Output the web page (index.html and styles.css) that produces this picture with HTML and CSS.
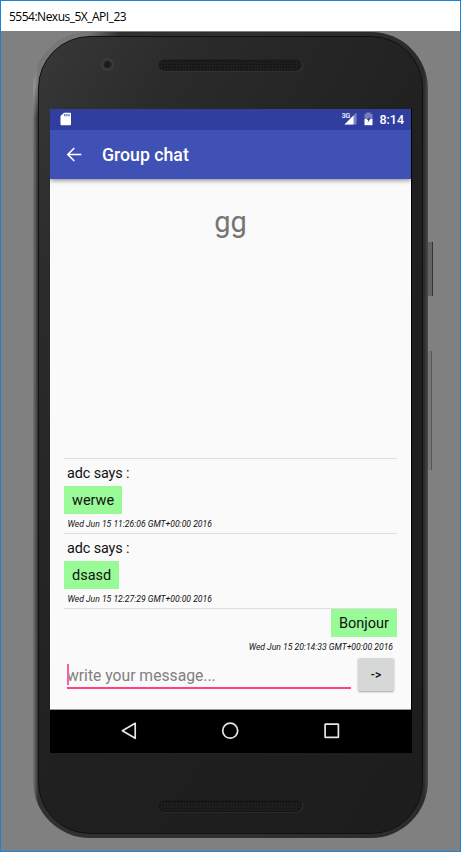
FILE: index.html
```html
<!DOCTYPE html>
<html lang="en">
<head>
<meta charset="utf-8">
<title>5554:Nexus_5X_API_23</title>
<link rel="stylesheet" href="styles.css">
</head>
<body>
<div class="window">
  <header class="titlebar"><span class="window-title">5554:Nexus_5X_API_23</span></header>
  <main class="desk">
    <div class="phone">
      <i class="side-button power"></i>
      <i class="side-button volume"></i>
      <div class="body">
        <div class="top-bezel">
          <div class="camera"></div>
          <svg class="speaker" width="146" height="13" viewBox="0 0 146 13">
            <defs><pattern id="holes" x="1.5" y="1.5" width="3" height="3" patternUnits="userSpaceOnUse"><rect width="3" height="3" fill="#232323"/><rect width="1.6" height="1.6" fill="#060606"/></pattern></defs>
            <rect x=".5" y="1" width="144.5" height="11.5" rx="5.7" fill="#3a3a3a"/>
            <rect x=".5" y=".5" width="143.5" height="11.5" rx="5.7" fill="#1b1b1b"/>
            <rect x="2.5" y="2" width="140" height="9" rx="4.5" fill="url(#holes)"/>
          </svg>
        </div>
        <div class="screen">
          <div class="status">
            <svg class="sd" width="12" height="14" viewBox="0 0 12 14"><path d="M4 .7h6.3q.7 0 .7 1v10.6q0 1-1 1H1.5q-1 0-1-1V4z" fill="#fff"/><path d="M4.8 2v2.3M6.9 2v2.3M9 2v2.3" stroke="#303f9f" stroke-width="1"/></svg>
            <span class="net">3G</span>
            <svg class="signal" width="13" height="13" viewBox="0 0 13 13"><path d="M12.5.5v12H.5z" fill="#7d87c3"/><path d="M9.5 3.5v9H.5z" fill="#fff"/></svg>
            <svg class="battery" width="9" height="14" viewBox="0 0 9 14"><path d="M2.5 1.7V.5h4v1.2h2V7H.5V1.7z" fill="#7780bd"/><path d="M.5 7h8v6.2h-8z" fill="#fff"/><path d="M6 4 2.8 8h1.600L3.500 10.700 6.500 7H5z" fill="#303f9f"/></svg>
            <span class="clock">8:14</span>
          </div>
          <div class="appbar">
            <svg class="back" width="16" height="16" viewBox="0 0 16 16" fill="none" stroke="#fff" stroke-width="1.6"><path d="M15.3 7.5H2M8.3 1 1.8 7.5 8.3 14"/></svg>
            <span class="heading">Group chat</span>
          </div>
          <div class="content">
            <div class="group-name">gg</div>
            <div class="messages">
              <section class="message">
                <div class="sender">adc says :</div>
                <div class="bubble">werwe</div>
                <div class="time">Wed Jun 15 11:26:06 GMT+00:00 2016</div>
              </section>
              <section class="message">
                <div class="sender">adc says :</div>
                <div class="bubble">dsasd</div>
                <div class="time">Wed Jun 15 12:27:29 GMT+00:00 2016</div>
              </section>
              <section class="message own">
                <div class="bubble">Bonjour</div>
                <div class="time">Wed Jun 15 20:14:33 GMT+00:00 2016</div>
              </section>
            </div>
            <div class="composer">
              <div class="field"><i class="caret"></i>write your message...</div>
              <div class="send">-&gt;</div>
            </div>
          </div>
          <div class="nav">
            <svg width="362" height="43" viewBox="0 0 362 43" fill="none" stroke="#e6e6e6" stroke-width="1.7"><path d="M85.2 13.3v15L72.4 20.8z" stroke-linejoin="round"/><circle cx="180.2" cy="20.7" r="7.5"/><rect x="275.1" y="14.1" width="13.3" height="13.3" rx=".5"/></svg>
          </div>
        </div>
        <div class="bottom-bezel">
          <svg class="speaker" width="146" height="13" viewBox="0 0 146 13">
            <rect x=".5" y="1" width="144.5" height="11.5" rx="5.7" fill="#353535"/>
            <rect x=".5" y=".5" width="143.5" height="11.5" rx="5.7" fill="#141414"/>
            <rect x="2.5" y="2" width="140" height="9" rx="4.5" fill="url(#holes)"/>
          </svg>
        </div>
      </div>
    </div>
  </main>
</div>
</body>
</html>
```

FILE: styles.css
```css
* { box-sizing: border-box; }
body { margin: 0; font-family: Roboto, "Liberation Sans", sans-serif; }
.window { width: 461px; height: 852px; border: 1px solid #1883d7; background: #808080; overflow: hidden; }
.titlebar { height: 30px; background: #fff; padding-left: 8px; line-height: 29px; }
.window-title { font-family: "Open Sans", "Noto Sans", sans-serif; font-size: 12px; letter-spacing: -0.5px; color: #000; white-space: nowrap; }
.desk { padding: 1px 0 0 32px; }
.phone {
  position: relative; width: 395px; height: 806px; padding: 4px 5px 4px 5px;
  border-radius: 57px;
  background: linear-gradient(90deg, #747474 0, #5c5c5c 2px, #303030 5px, #303030 50%, #2c2a2b 391px, #4a4849 395px);
}
.phone::before {
  content: ""; position: absolute; inset: 0; border-radius: 57px;
  background: linear-gradient(135deg, rgba(190,190,190,.5) 0, rgba(190,190,190,.5) 40px, transparent 62px);
}
.side-button { position: absolute; }
.power { left: 395px; top: 210px; width: 5px; height: 54px; background: #656364; border-right: 1px solid #353334; }
.volume { left: 395px; top: 319px; width: 4px; height: 119px; background: #777; border-right: 1px solid #555354; }
.body {
  position: relative; width: 385px; height: 798px; border: 1px solid #101010;
  border-radius: 52px;
  background: linear-gradient(120deg, #383838 0, #2b2b2b 130px, #202020 380px, #1d1d1e 100%);
  padding-left: 11px;
}
.top-bezel { height: 72px; display: flex; padding: 21px 0 0 51px; }
.camera { width: 13px; height: 13px; border-radius: 50%; background: radial-gradient(circle at 50% 50%, #17171d 0, #1e1e24 3px, #3c3c3c 5px, #383838 7px); }
.top-bezel .speaker { margin-left: 44px; margin-top: 1px; }
.screen { width: 362px; height: 644px; background: #000; }
.status { width: 361px; height: 21px; background: #303f9f; display: flex; padding: 4px 7px 0 10px; color: #fff; }
.net { font-size: 7px; line-height: 7px; font-weight: 500; margin-left: auto; position: relative; }
.sd { margin-top: -1px; }
.signal { margin-left: -6px; margin-top: -1px; }
.battery { margin: -1px 0 0 7px; }
.clock { font-size: 12.5px; line-height: 14px; font-weight: 500; margin-left: 6px; }
.appbar { position: relative; width: 361px; height: 49px; background: #3f51b5; display: flex; align-items: center; padding-left: 16px; box-shadow: 0 1px 5px rgba(0,0,0,.5); clip-path: inset(0 0 -8px 0); color: #fff; }
.heading { font-size: 17.7px; font-weight: 500; margin-left: 20px; padding-top: 1px; }
.content { width: 361px; height: 531px; background: #fafafa; padding: 0 14px; border-bottom: 1px solid #999; color: #111; }
.group-name { height: 279px; padding-top: 25px; font-size: 29px; line-height: 36px; text-align: center; color: #757575; }
.message { height: 75px; border-top: 1px solid #dedede; display: flex; flex-direction: column; align-items: flex-start; }
.message > * { flex-shrink: 0; }
.sender { height: 27px; padding: 5px 0 0 3px; font-size: 14.4px; line-height: 19px; letter-spacing: -0.1px; }
.bubble { height: 28px; padding: 0 8px; background: #98fb98; font-size: 14.5px; line-height: 29px; }
.time { padding-left: 3.5px; font-size: 8.6px; font-style: italic; line-height: 20px; white-space: nowrap; }
.own { height: 50px; align-items: flex-end; }
.own .bubble { line-height: 29px; }
.own .time { padding: 0 4px 0 0; }
.composer { display: flex; justify-content: space-between; padding: 0 3px; }
.field { position: relative; width: 284px; height: 31px; border-bottom: 2px solid #ff4081; color: #808080; font-size: 15.7px; line-height: 36px; white-space: nowrap; }
.caret { position: absolute; left: 0; top: 6px; width: 2px; height: 21px; background: #ff5f96; }
.send { width: 36px; height: 33px; background: #d6d7d7; border-radius: 2px; box-shadow: 0 1px 2px rgba(0,0,0,.35); font-size: 12px; font-weight: 500; line-height: 35px; text-align: center; }
.nav { height: 43px; }
.nav svg { display: block; }
.bottom-bezel { padding: 45px 0 0 108px; }
```
